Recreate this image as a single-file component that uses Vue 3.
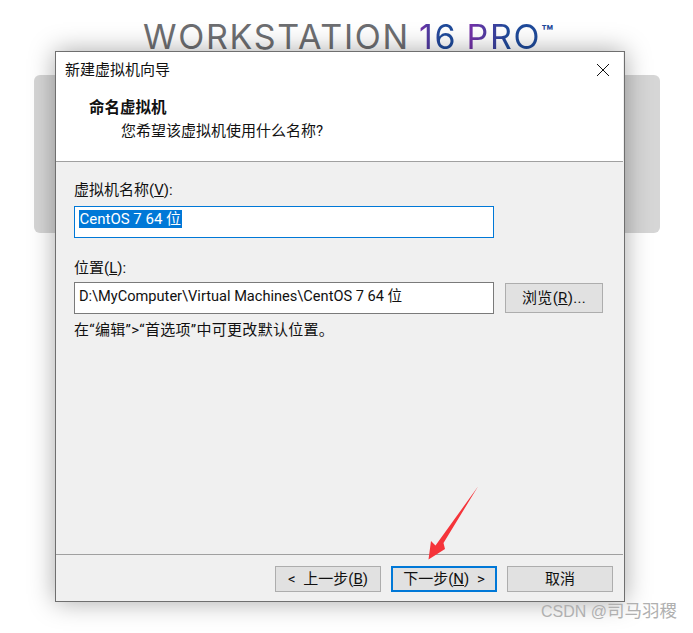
<script setup>
</script>

<template>
  <div class="page">
    <div class="logo">WORKSTATION <span class="grad">16</span> <span class="grad">PRO</span><span class="tm">™</span></div>
    <div class="backdrop"></div>

    <section class="dialog">
      <header class="head">
        <div class="titlebar">
          <span>新建虚拟机向导</span>
          <svg class="close" width="14" height="14" viewBox="0 0 14 14"><path d="M1 1 L13 13 M13 1 L1 13" stroke="#111" stroke-width="1" fill="none"/></svg>
        </div>
        <h1 class="heading">命名虚拟机</h1>
        <p class="sub">您希望该虚拟机使用什么名称?</p>
      </header>

      <main class="body">
        <label class="label">虚拟机名称(<u>V</u>):</label>
        <div class="input focus"><span class="sel">CentOS 7 64 位</span></div>
        <label class="label second">位置(<u>L</u>):</label>
        <div class="row">
          <div class="input path">D:\MyComputer\Virtual Machines\CentOS 7 64 位</div>
          <button class="btn browse">浏览(<u>R</u>)...</button>
        </div>
        <p class="hint">在“编辑”&gt;“首选项”中可更改默认位置。</p>
      </main>

      <footer class="foot">
        <button class="btn act">&lt; 上一步(<u>B</u>)</button>
        <button class="btn act primary">下一步(<u>N</u>) &gt;</button>
        <button class="btn act cancel">取消</button>
      </footer>
    </section>

    <svg class="arrow" width="60" height="80" viewBox="0 0 60 80">
      <path d="M53 0.500 L18.500 57 L20 63 L3.500 73.500 L6 55 L10.500 59.500 Z" fill="#f5343a"/>
    </svg>

    <div class="mark">CSDN @<span class="mark-cjk">司马羽稷</span></div>
  </div>
</template>

<style>
html, body { margin: 0; background: #fff; }
</style>

<style scoped>
.page {
  position: relative;
  width: 693px;
  height: 633px;
  overflow: hidden;
  background: #fff;
  font-family: Roboto, "Noto Sans CJK SC", sans-serif;
  color: #111;
}
.logo {
  padding-top: 12px;
  height: 41px;
  line-height: 41px;
  margin-left: 143px;
  white-space: nowrap;
  font-family: Inter, sans-serif;
  font-size: 34px;
  letter-spacing: 1.700px;
  word-spacing: -2px;
  color: #6d6e71;
}
.grad {
  background: linear-gradient(90deg, #7a2fa8, #1f4a9a 55%, #1f4a9a);
  -webkit-background-clip: text;
  background-clip: text;
  color: transparent;
}
.tm {
  font-size: 19px;
  font-weight: 700;
  letter-spacing: 0;
  vertical-align: 10px;
  color: #1f4a9a;
}
.backdrop {
  margin: 22px 0 0 34px;
  width: 626px;
  height: 158px;
  border-radius: 6px;
  background: #d6d6d6;
}
.dialog {
  position: absolute;
  left: 55px;
  top: 51px;
  width: 568px;
  height: 549px;
  display: flex;
  flex-direction: column;
  background: #f0f0f0;
  border: 1px solid #6f6f6f;
  box-shadow: 0 0 24px rgba(0, 0, 0, 0.34);
}
.head {
  height: 109px;
  flex: none;
  background: #fff;
  border-bottom: 1px solid #a0a0a0;
  margin-right: 1px;
}
.titlebar {
  display: flex;
  justify-content: space-between;
  align-items: center;
  height: 36px;
  padding: 0 13px 0 9px;
  font-size: 15px;
  line-height: 36px;
}
.close { margin-top: -1px; }
.heading {
  margin: 0 0 0 33px;
  font-size: 15.500px;
  font-weight: 700;
  line-height: 20px;
  padding-top: 10px;
  height: 20px;
}
.sub {
  margin: 3px 0 0 65px;
  font-size: 15px;
  line-height: 20px;
}
.body {
  flex: 1;
  padding: 18px 0 0 18px;
  font-size: 15px;
}
.label {
  display: block;
  height: 20px;
  line-height: 20px;
}
.second { margin-top: 20px; }
.input {
  box-sizing: border-box;
  width: 420px;
  height: 32px;
  margin-top: 6px;
  padding: 2px 4px;
  background: #fff;
  border: 1px solid #7a7a7a;
  line-height: 20px;
  white-space: nowrap;
}
.focus { border-color: #0078d7; }
.sel {
  display: inline-block;
  height: 18px;
  line-height: 18px;
  padding: 0 0.5px;
  background: #0078d7;
  color: #fff;
}
.row {
  display: flex;
  align-items: center;
  gap: 11px;
  margin-top: -2px;
}
.path {
  flex: none;
  font-size: 14.600px;
  padding-top: 3px;
}
.btn {
  box-sizing: border-box;
  background: #e1e1e1;
  border: 1px solid #adadad;
  font: inherit;
  color: #111;
  padding: 0;
  font-size: 15px;
  line-height: 20px;
}
.browse {
  width: 98px;
  height: 30px;
  margin-top: 6px;
  letter-spacing: 0.300px;
}
.hint {
  margin: 6px 0 0;
  line-height: 20px;
  letter-spacing: 0.300px;
}
.foot {
  flex: none;
  height: 47px;
  box-sizing: border-box;
  display: flex;
  gap: 10px;
  padding: 11px 0 0 219px;
  border-top: 1px solid #a0a0a0;
  margin-right: 1px;
}
.act {
  width: 106px;
  height: 26px;
  word-spacing: 4px;
}
.primary {
  border: 2px solid #0078d7;
}
.arrow {
  position: absolute;
  left: 425px;
  top: 486px;
}
.mark {
  position: absolute;
  left: 541px;
  top: 601px;
  font-family: "Liberation Sans", "Noto Sans CJK SC", sans-serif;
  font-size: 16px;
  line-height: 20px;
  color: #b0b0b0;
  white-space: nowrap;
}
.mark-cjk { font-size: 17.500px; }
</style>
